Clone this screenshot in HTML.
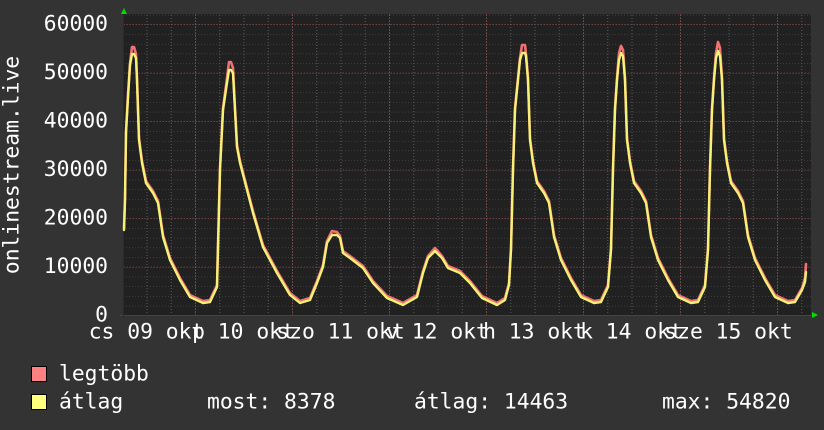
<!DOCTYPE html>
<html><head><meta charset="utf-8"><style>
html,body{margin:0;padding:0;background:#333333;}
svg{display:block}
text{font-family:"DejaVu Sans Mono","Liberation Mono",monospace;font-size:21.33px;fill:#ffffff;}
</style></head><body>
<svg width="824" height="430" viewBox="0 0 824 430" xmlns="http://www.w3.org/2000/svg">
<defs>
<pattern id="vmin" patternUnits="userSpaceOnUse" x="122.25" y="0" width="24.25" height="430">
<line x1="0.5" y1="0" x2="0.5" y2="430" stroke="#5a5a5a" stroke-width="1" stroke-dasharray="1,2"/>
</pattern>
<pattern id="hmin" patternUnits="userSpaceOnUse" x="0" y="315.5" width="824" height="9.7">
<line x1="0" y1="0" x2="824" y2="0" stroke="#5a5a5a" stroke-width="1" stroke-dasharray="1,2"/>
</pattern>
</defs>
<rect x="0" y="0" width="824" height="430" fill="#333333"/>
<rect x="124" y="14" width="687" height="302" fill="#212121"/>
<rect x="124" y="14" width="687" height="302" fill="url(#vmin)"/>
<rect x="124" y="14" width="687" height="302" fill="url(#hmin)"/>
<g stroke="#7a3a3a" stroke-width="1" stroke-dasharray="1,2">
<line x1="124" y1="24.5" x2="811" y2="24.5"/>
<line x1="124" y1="73" x2="811" y2="73"/>
<line x1="124" y1="121.5" x2="811" y2="121.5"/>
<line x1="124" y1="170" x2="811" y2="170"/>
<line x1="124" y1="218.5" x2="811" y2="218.5"/>
<line x1="124" y1="267" x2="811" y2="267"/>
<line x1="195.5" y1="14" x2="195.5" y2="316"/>
<line x1="292.5" y1="14" x2="292.5" y2="316"/>
<line x1="389.5" y1="14" x2="389.5" y2="316"/>
<line x1="486.5" y1="14" x2="486.5" y2="316"/>
<line x1="583.5" y1="14" x2="583.5" y2="316"/>
<line x1="680.5" y1="14" x2="680.5" y2="316"/>
<line x1="777.5" y1="14" x2="777.5" y2="316"/>
</g>
<line x1="120" y1="315.5" x2="812" y2="315.5" stroke="#444" stroke-width="1"/>
<line x1="123.5" y1="12" x2="123.5" y2="318" stroke="#2a2a2a" stroke-width="1"/>
<polygon points="121,14 127,14 124,8" fill="#00dd00"/>
<polygon points="812,312 812,318 818,315" fill="#00dd00"/>

<g fill="none" stroke-linejoin="round" stroke-linecap="round">
<path id="c" transform="translate(0,-2)" stroke="#f07272" stroke-width="2.6" d="M124,230 L125,200 126,133 128,97 130,65 132,49 134,49 136,56 137,80 139,140 142,163 146,183 153,193 158,203 163,237 170,260 180,280 190,297 203,303 210,302 217,287 218,247 220,170 223,110 227,80 229,64 231,64 233,70 235,110 237,147 240,163 247,190 253,213 263,247 277,273 290,295 300,303 310,300 317,283 323,267 327,243 332,233 337,234 340,238 343,253 350,258 363,268 373,283 387,298 403,305 417,297 423,273 428,258 435,250 442,258 448,268 460,273 470,283 482,298 497,305 505,300 509,285 511,250 513,170 515,110 518,80 520,60 522,47 525,47 526,56 528,80 530,140 533,163 537,183 544,193 549,203 554,237 561,260 571,280 581,297 594,303 601,302 608,287 611,250 613,170 615,110 617,80 619,55 621,48 623,52 625,80 627,140 630,163 634,183 641,193 646,203 651,237 658,260 668,280 678,297 691,303 698,302 705,287 708,250 710,170 712,110 714,80 716,55 718,44 720,50 722,80 724,140 727,163 731,183 738,193 743,203 748,237 755,260 765,280 775,297 788,303 795,302 802,290 805,280 806,266"/>
<path stroke="#f6f276" stroke-width="2.4" d="M124,230 L125,200 126,133 128,97 130,65 132,54 134,54 136,58 137,80 139,140 142,163 146,183 153,193 158,203 163,237 170,260 180,280 190,297 203,303 210,302 217,287 218,247 220,170 223,110 227,83 229,70 231,70 233,73 235,110 237,147 240,163 247,190 253,213 263,247 277,273 290,295 300,303 310,300 317,283 323,267 327,243 332,235 337,235 340,238 343,253 350,258 363,268 373,283 387,298 403,305 417,297 423,273 428,258 435,251 442,258 448,268 460,273 470,283 482,298 497,305 505,300 509,285 511,250 513,170 515,110 518,80 520,60 522,53 525,53 526,56 528,80 530,140 533,163 537,183 544,193 549,203 554,237 561,260 571,280 581,297 594,303 601,302 608,287 611,250 613,170 615,110 617,80 619,60 621,53 623,56 625,80 627,140 630,163 634,183 641,193 646,203 651,237 658,260 668,280 678,297 691,303 698,302 705,287 708,250 710,170 712,110 714,80 716,58 718,51 720,56 722,80 724,140 727,163 731,183 738,193 743,203 748,237 755,260 765,280 775,297 788,303 795,302 802,290 805,282 806,272"/>
</g>

<g text-anchor="end" dominant-baseline="central">
<text x="108" y="24">60000</text>
<text x="108" y="72.5">50000</text>
<text x="108" y="121">40000</text>
<text x="108" y="169.5">30000</text>
<text x="108" y="218">20000</text>
<text x="108" y="266.5">10000</text>
<text x="108" y="315">0</text>
</g>
<text transform="translate(12,165) rotate(-90)" text-anchor="middle" dominant-baseline="central">onlinestream.live</text>

<g text-anchor="middle" dominant-baseline="central">
<text x="146.5" y="332">cs 09 okt</text>
<text x="243.5" y="332">p 10 okt</text>
<text x="340.5" y="332">szo 11 okt</text>
<text x="437.5" y="332">v 12 okt</text>
<text x="534.5" y="332">h 13 okt</text>
<text x="631.5" y="332">k 14 okt</text>
<text x="728.5" y="332">sze 15 okt</text>
</g>

<rect x="31.5" y="366.5" width="15" height="15" fill="#ff8080" stroke="#000" stroke-width="1"/>
<rect x="31.5" y="394.5" width="15" height="15" fill="#ffff80" stroke="#000" stroke-width="1"/>
<g dominant-baseline="central">
<text x="59" y="374">legtöbb</text>
<text x="59" y="402">átlag</text>
<text x="207" y="402">most: 8378</text>
<text x="414" y="402">átlag: 14463</text>
<text x="662" y="402">max: 54820</text>
</g>
</svg>
</body></html>
